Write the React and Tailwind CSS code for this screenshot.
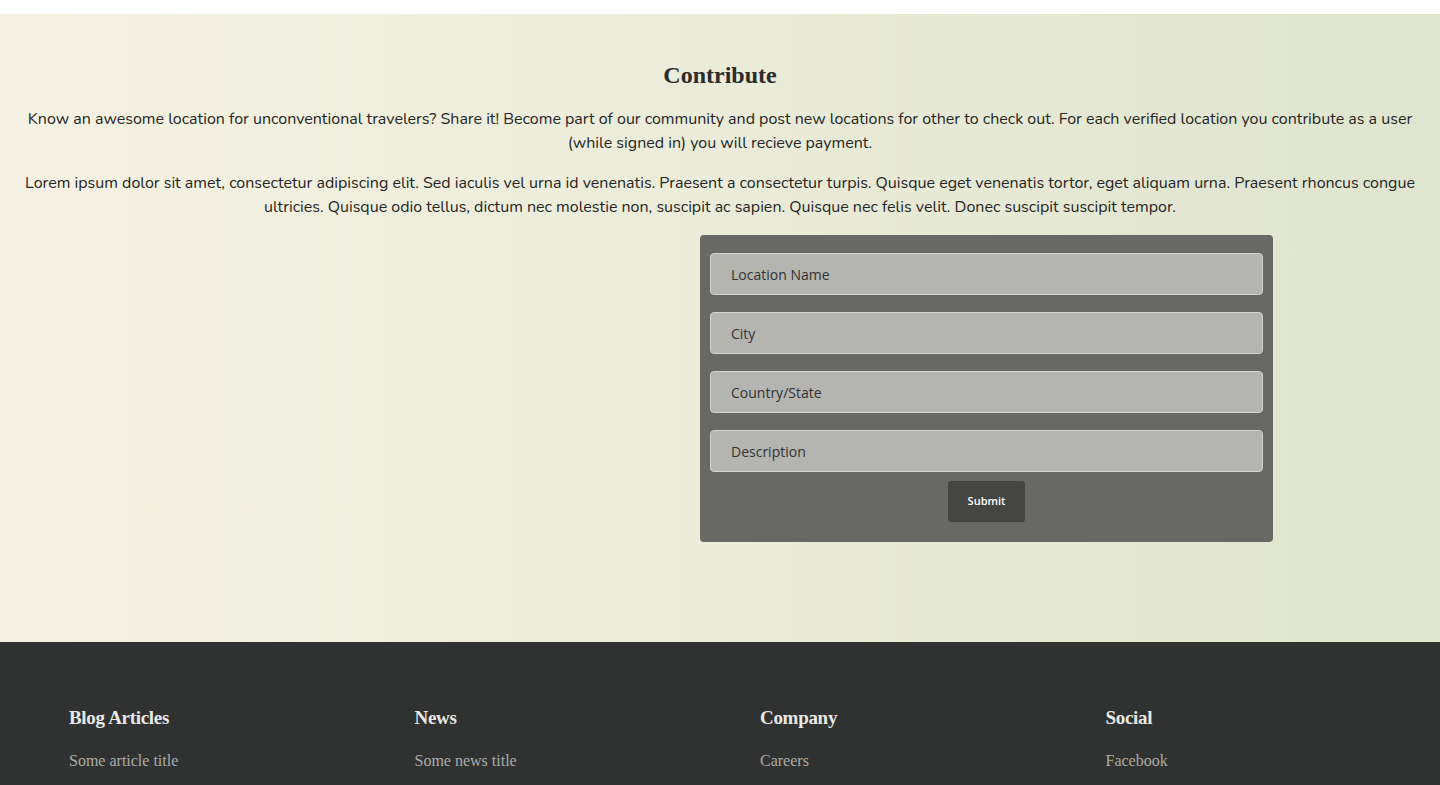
const fields = ['Location Name', 'City', 'Country/State', 'Description'];

const footerCols = [
  { title: 'Blog Articles', link: 'Some article title' },
  { title: 'News', link: 'Some news title' },
  { title: 'Company', link: 'Careers' },
  { title: 'Social', link: 'Facebook' },
];

export default function App() {
  return (
    <div className="min-h-screen bg-white font-['Nunito','Lato',sans-serif]">
      {/* top strip */}
      <div className="h-[14px] bg-white"></div>

      {/* Contribute section */}
      <section className="bg-linear-to-r from-[#f6f2e3] to-[#dfe5ce] pt-[46px] pb-[100px]">
        <h2 className="text-center font-['Liberation_Serif',serif] font-bold text-[24px] leading-[30px] text-[#2b2b2b]">
          Contribute
        </h2>
        <div className="px-[15px] mt-[17px] text-center text-[16px] leading-[24px] text-[#262626]">
          <p>
            Know an awesome location for unconventional travelers? Share it! Become part of our community and post new
            locations for other to check out. For each verified location you contribute as a user (while signed in) you
            will recieve payment.
          </p>
          <p className="mt-[16px]">
            Lorem ipsum dolor sit amet, consectetur adipiscing elit. Sed iaculis vel urna id venenatis. Praesent a
            consectetur turpis. Quisque eget venenatis tortor, eget aliquam urna. Praesent rhoncus congue ultricies.
            Quisque odio tellus, dictum nec molestie non, suscipit ac sapien. Quisque nec felis velit. Donec suscipit
            suscipit tempor.
          </p>
        </div>

        <div className="flex mt-[16px]">
          <div className="w-[700px] shrink-0"></div>
          <form className="w-[573px] bg-[#686964] rounded-[4px] px-[10px] pt-[18px] pb-[20px] flex flex-col">
            {fields.map((f) => (
              <input
                key={f}
                type="text"
                placeholder={f}
                className="h-[42px] mb-[17px] last-of-type:mb-0 bg-[#b4b5b0] border border-[#d2d3ce] rounded-[4px] px-[20px] text-[14px] font-['Open_Sans',sans-serif] text-[#333] placeholder:text-[#333] outline-none"
              />
            ))}
            <button
              type="button"
              className="self-center mt-[9px] w-[77px] h-[41px] bg-[#454642] rounded-[3px] text-white text-[11px] font-semibold font-['Open_Sans',sans-serif]"
            >
              Submit
            </button>
          </form>
        </div>
      </section>

      {/* Footer */}
      <footer className="bg-[#303231] pl-[69px] pr-[4px] pt-[64px] pb-[40px] font-['Liberation_Serif',serif]">
        <div className="grid grid-cols-4 gap-x-[15px]">
          {footerCols.map((c) => (
            <div key={c.title}>
              <h4 className="font-bold text-[19px] leading-[24px] tracking-[-0.3px] text-[#e8e8e6]">{c.title}</h4>
              <a href="#" className="block mt-[21px] text-[16px] leading-[20px] text-[#aaaba7]">
                {c.link}
              </a>
            </div>
          ))}
        </div>
      </footer>
    </div>
  );
}
